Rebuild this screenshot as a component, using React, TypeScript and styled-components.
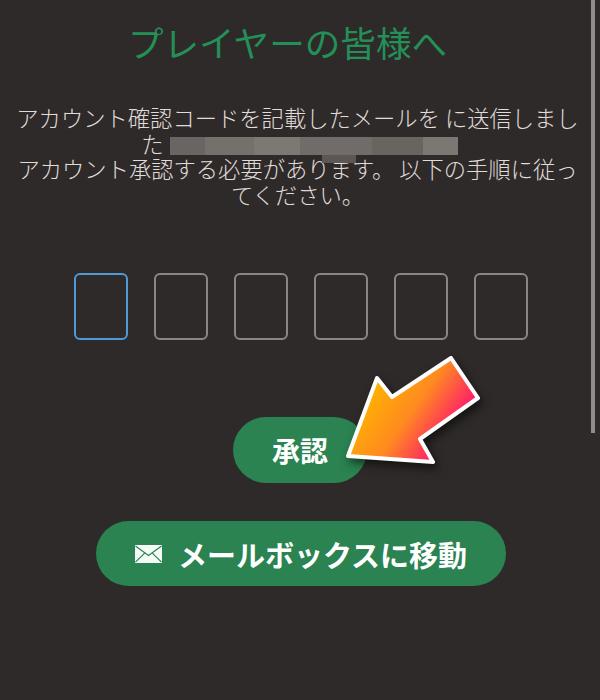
import React from "react";
import styled, { createGlobalStyle } from "styled-components";

const Global = createGlobalStyle`
  html, body {
    margin: 0;
    padding: 0;
    background: #2e2a29;
  }
  * {
    box-sizing: border-box;
  }
`;

const Wrapper = styled.div`
  position: relative;
  width: 600px;
  height: 700px;
  overflow: hidden;
  padding: 17px 20px 0 15px;
  background-color: #2e2a29;
  font-family: "Noto Sans CJK JP", "Noto Sans", sans-serif;
  display: flex;
  flex-direction: column;
  align-items: center;
`;

const ScrollThumb = styled.div`
  position: absolute;
  top: 0;
  right: 5px;
  width: 4px;
  height: 433px;
  background-color: #8f8c8a;
`;

const Title = styled.h1`
  margin: 0 20px 0 0;
  color: #239058;
  font-size: 35.6px;
  font-weight: 400;
  line-height: 50px;
`;

const Message = styled.p`
  margin: 38px 0 0;
  width: 100%;
  color: #e0dcd9;
  font-size: 22.3px;
  font-weight: 300;
  line-height: 25.6px;
  text-align: center;
`;

const Masked = styled.span`
  position: relative;
  display: inline-block;
  width: 288px;
  height: 18px;
  margin: 0 -4px 0 6px;
  vertical-align: -2px;
  background: linear-gradient(
    90deg,
    #6a6562 0 12%,
    #75706c 12% 29%,
    #7e7874 29% 45%,
    #716c69 45% 70%,
    #69645f 70% 88%,
    #7d7773 88% 100%
  );

  &::after {
    content: "";
    position: absolute;
    left: 152px;
    top: 18px;
    width: 34px;
    height: 8px;
    background-color: #5c5754;
  }
`;

const Codes = styled.div`
  display: flex;
  gap: 26px;
  margin: 66px 0 0 6px;
`;

const CodeBox = styled.div<{ $active?: boolean }>`
  width: 54px;
  height: 67px;
  border-radius: 6px;
  border: 2px solid ${(p) => (p.$active ? "#4f9ad6" : "#8b8683")};
`;

const ConfirmRow = styled.div`
  position: relative;
  margin: 77px 0 0 5px;
`;

const GreenButton = styled.button`
  display: flex;
  align-items: center;
  justify-content: center;
  border: 0;
  border-radius: 33px;
  background-color: #2a8350;
  color: #ffffff;
  font-family: inherit;
  font-weight: 700;
  padding: 0;
`;

const ConfirmButton = styled(GreenButton)`
  width: 134px;
  height: 66px;
  font-size: 28px;
`;

const MailButton = styled(GreenButton)`
  width: 410px;
  height: 65px;
  gap: 16px;
  margin: 38px 0 0 7px;
  font-size: 29px;
`;

const Arrow = styled.svg`
  position: absolute;
  left: 105px;
  top: -59px;
  width: 150px;
  height: 125px;
  overflow: visible;
  filter: drop-shadow(3px 5px 5px rgba(0, 0, 0, 0.55));
`;

export default function App() {
  return (
    <Wrapper>
      <Global />
      <ScrollThumb />
      <Title>プレイヤーの皆様へ</Title>
      <Message>
        アカウント確認コードを記載したメールを に送信しました
        <Masked />
        <br />
        アカウント承認する必要があります。 以下の手順に従ってください。
      </Message>
      <Codes>
        {[0, 1, 2, 3, 4, 5].map((i) => (
          <CodeBox key={i} $active={i === 0} />
        ))}
      </Codes>
      <ConfirmRow>
        <ConfirmButton>承認</ConfirmButton>
        <Arrow viewBox="0 0 150 125">
          <defs>
            <linearGradient
              id="arrowFill"
              gradientUnits="userSpaceOnUse"
              x1="25"
              y1="40"
              x2="103"
              y2="95"
            >
              <stop offset="0" stopColor="#ffb300" />
              <stop offset="0.5" stopColor="#ff8a20" />
              <stop offset="1" stopColor="#ff1470" />
            </linearGradient>
          </defs>
          {/* points measured off the reference, button-relative */}
          <path
            d="M10 98 L39 20 L54 39 L113 0 L140 40 L82 81 L95 104 Z"
            fill="url(#arrowFill)"
            stroke="#ffffff"
            strokeWidth="4"
            strokeLinejoin="round"
          />
        </Arrow>
      </ConfirmRow>
      <MailButton>
        <svg width="27" height="18" viewBox="0 0 28 19" preserveAspectRatio="none">
          <rect x="0" y="0" width="28" height="19" fill="#f4fbf6" />
          <path
            d="M0.5 1 L14 11 L27.5 1 M0.5 18 L10 8.5 M27.5 18 L18 8.5"
            fill="none"
            stroke="#2a8350"
            strokeWidth="1.2"
          />
        </svg>
        メールボックスに移動
      </MailButton>
    </Wrapper>
  );
}
